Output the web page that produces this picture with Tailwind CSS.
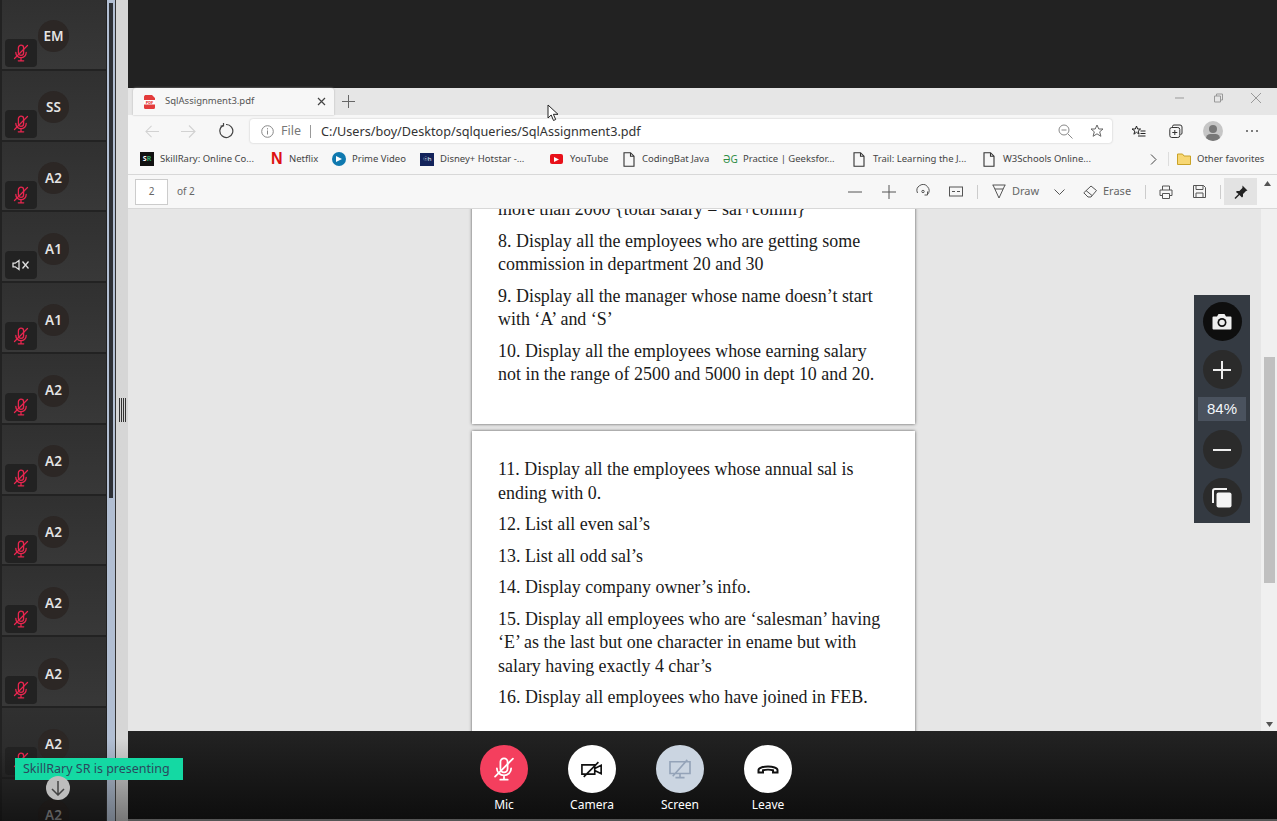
<!doctype html>
<html lang="en"><head><meta charset="utf-8"><title>Meeting</title>
<script src="https://cdn.jsdelivr.net/npm/@tailwindcss/browser@4"></script></head>
<body class="m-0 overflow-hidden bg-[#222]">
<svg width="0" height="0" class="absolute">
<defs>
<symbol id="mm" viewBox="0 0 16 18"><g fill="none" stroke="currentColor" stroke-width="1.300" stroke-linecap="round"><path d="M5.400 8.500V3.800a2.600 2.600 0 0 1 5.200 0v5a2.600 2.600 0 0 1-5.200 0"/><path d="M2.800 8.500a5.200 5.200 0 0 0 10.400 0M8 13.800V16.500M5.300 16.800h5.400"/><path d="M1.500 14.500L14.500 1.500"/></g></symbol>
<symbol id="doc" viewBox="0 0 12 15"><path d="M1 .7h6.500L11 4.200v10H1zM7.500.7v3.500H11" fill="none" stroke="#333" stroke-width="1.100"/></symbol>
</defs></svg>
<div class="relative w-[1277px] h-[821px] flex overflow-hidden font-['Noto_Sans',sans-serif]">
  <!-- participants rail -->
  <div class="relative w-[107px] h-full shrink-0 pl-[2px] bg-[#222] border-r border-[#222] overflow-hidden">
    <div class="flex flex-col text-[#e4e4e4] text-[13.500px] font-semibold">
      <div class="relative h-[70.8px] shrink-0 border-b-2 border-[#222] bg-gradient-to-b from-[#303030] to-[#383838]"><span class="absolute left-[36px] top-[20px] w-[31px] h-[32px] rounded-full bg-[#2c2725] flex items-center justify-center">EM</span><span class="absolute left-[3px] top-[39px] w-[32px] h-[28px] rounded-[4px] bg-[#222] flex items-center justify-center text-[#e8264f]"><svg width="16" height="18"><use href="#mm"/></svg></span></div>
      <div class="relative h-[70.8px] shrink-0 border-b-2 border-[#222] bg-gradient-to-b from-[#303030] to-[#383838]"><span class="absolute left-[36px] top-[20px] w-[31px] h-[32px] rounded-full bg-[#2c2725] flex items-center justify-center">SS</span><span class="absolute left-[3px] top-[39px] w-[32px] h-[28px] rounded-[4px] bg-[#222] flex items-center justify-center text-[#e8264f]"><svg width="16" height="18"><use href="#mm"/></svg></span></div>
      <div class="relative h-[70.8px] shrink-0 border-b-2 border-[#222] bg-gradient-to-b from-[#303030] to-[#383838]"><span class="absolute left-[36px] top-[20.600px] w-[31px] h-[32px] rounded-full bg-[#2c2725] flex items-center justify-center">A2</span><span class="absolute left-[3px] top-[39px] w-[32px] h-[28px] rounded-[4px] bg-[#222] flex items-center justify-center text-[#e8264f]"><svg width="16" height="18"><use href="#mm"/></svg></span></div>
      <div class="relative h-[70.8px] shrink-0 border-b-2 border-[#222] bg-gradient-to-b from-[#303030] to-[#383838]"><span class="absolute left-[36px] top-[20.600px] w-[31px] h-[32px] rounded-full bg-[#2c2725] flex items-center justify-center">A1</span><span class="absolute left-[3px] top-[39px] w-[32px] h-[28px] rounded-[4px] bg-[#222] flex items-center justify-center text-[#e0e0e0]"><svg width="18" height="12" viewBox="0 0 18 12" fill="none" stroke="currentColor" stroke-width="1.300"><path d="M1 4.200h2.200L7 1.500v9L3.200 7.800H1z"/><path d="M10.500 2.500l6 7M16.500 2.500l-6 7"/></svg></span></div>
      <div class="relative h-[70.8px] shrink-0 border-b-2 border-[#222] bg-gradient-to-b from-[#303030] to-[#383838]"><span class="absolute left-[36px] top-[20.600px] w-[31px] h-[32px] rounded-full bg-[#2c2725] flex items-center justify-center">A1</span><span class="absolute left-[3px] top-[39px] w-[32px] h-[28px] rounded-[4px] bg-[#222] flex items-center justify-center text-[#e8264f]"><svg width="16" height="18"><use href="#mm"/></svg></span></div>
      <div class="relative h-[70.8px] shrink-0 border-b-2 border-[#222] bg-gradient-to-b from-[#303030] to-[#383838]"><span class="absolute left-[36px] top-[20.600px] w-[31px] h-[32px] rounded-full bg-[#2c2725] flex items-center justify-center">A2</span><span class="absolute left-[3px] top-[39px] w-[32px] h-[28px] rounded-[4px] bg-[#222] flex items-center justify-center text-[#e8264f]"><svg width="16" height="18"><use href="#mm"/></svg></span></div>
      <div class="relative h-[70.8px] shrink-0 border-b-2 border-[#222] bg-gradient-to-b from-[#303030] to-[#383838]"><span class="absolute left-[36px] top-[20.600px] w-[31px] h-[32px] rounded-full bg-[#2c2725] flex items-center justify-center">A2</span><span class="absolute left-[3px] top-[39px] w-[32px] h-[28px] rounded-[4px] bg-[#222] flex items-center justify-center text-[#e8264f]"><svg width="16" height="18"><use href="#mm"/></svg></span></div>
      <div class="relative h-[70.8px] shrink-0 border-b-2 border-[#222] bg-gradient-to-b from-[#303030] to-[#383838]"><span class="absolute left-[36px] top-[20.600px] w-[31px] h-[32px] rounded-full bg-[#2c2725] flex items-center justify-center">A2</span><span class="absolute left-[3px] top-[39px] w-[32px] h-[28px] rounded-[4px] bg-[#222] flex items-center justify-center text-[#e8264f]"><svg width="16" height="18"><use href="#mm"/></svg></span></div>
      <div class="relative h-[70.8px] shrink-0 border-b-2 border-[#222] bg-gradient-to-b from-[#303030] to-[#383838]"><span class="absolute left-[36px] top-[20.600px] w-[31px] h-[32px] rounded-full bg-[#2c2725] flex items-center justify-center">A2</span><span class="absolute left-[3px] top-[39px] w-[32px] h-[28px] rounded-[4px] bg-[#222] flex items-center justify-center text-[#e8264f]"><svg width="16" height="18"><use href="#mm"/></svg></span></div>
      <div class="relative h-[70.8px] shrink-0 border-b-2 border-[#222] bg-gradient-to-b from-[#303030] to-[#383838]"><span class="absolute left-[36px] top-[20.600px] w-[31px] h-[32px] rounded-full bg-[#2c2725] flex items-center justify-center">A2</span><span class="absolute left-[3px] top-[39px] w-[32px] h-[28px] rounded-[4px] bg-[#222] flex items-center justify-center text-[#e8264f]"><svg width="16" height="18"><use href="#mm"/></svg></span></div>
      <div class="relative h-[70.8px] shrink-0 border-b-2 border-[#222] bg-gradient-to-b from-[#303030] to-[#2a2a2a]"><span class="absolute left-[36px] top-[20.600px] w-[31px] h-[32px] rounded-full bg-[#2c2725] flex items-center justify-center">A2</span><span class="absolute left-[3px] top-[39px] w-[32px] h-[28px] rounded-[4px] bg-[#222] flex items-center justify-center text-[#e8264f]"><svg width="16" height="18"><use href="#mm"/></svg></span></div>
      <div class="relative h-[70.8px] shrink-0 bg-[#2a2a2a]"><span class="absolute left-[36px] top-[20.600px] w-[31px] h-[32px] rounded-full bg-[#2c2725] flex items-center justify-center text-[#aaa]">A2</span></div>
    </div>
    <div class="absolute left-0 right-0 bottom-0 h-[70px] bg-gradient-to-b from-transparent to-black/50"></div>
  </div>
  <!-- rail scrollbar and splitter -->
  <div class="relative w-[8px] h-full shrink-0 bg-gradient-to-b from-[#b2bfd3] via-[#b2bfd3] via-90% to-[#6f7782] px-[2px]">
    <div class="mt-[3px] h-[495px] w-[4px] bg-[#2e3136]"></div>
  </div>
  <div class="w-[1px] h-full shrink-0 bg-[#333]"></div>
  <div class="relative w-[12px] h-full shrink-0 bg-gradient-to-b from-[#d6d6d6] via-[#d6d6d6] via-90% to-[#777] flex items-center justify-center">
    <div class="flex gap-[1px] h-[24px] -mt-[1px]">
      <span class="w-[1px] bg-[#333]"></span><span class="w-[1px] bg-[#333]"></span><span class="w-[1px] bg-[#333]"></span><span class="w-[1px] bg-[#333]"></span>
    </div>
  </div>
  <!-- main -->
  <div class="relative flex-1 min-w-0 h-full flex flex-col">
    <div class="h-[88px] shrink-0 bg-[#222]"></div>
    <div class="h-[643px] shrink-0 flex flex-col bg-[#f7f7f7] text-[#555]">
      <!-- tabs -->
      <div class="h-[27px] shrink-0 bg-[#e6e6e6] flex items-start relative">
        <div class="ml-[5px] w-[201px] h-[27px] bg-[#f7f7f7] rounded-t-[3px] shadow-[0_0_2px_#aaa] flex items-center pl-[10px] pr-[8px]">
          <svg width="13" height="14" viewBox="0 0 13 14"><path d="M2 0h7l3 3v9.500a1.500 1.500 0 0 1-1.500 1.500h-8.500a1.500 1.500 0 0 1-1-1.500V1.500z" fill="#e33b3b"/><rect x="1" y="5" width="11" height="4.500" fill="#fff"/><text x="6.500" y="8.800" font-size="4" font-weight="700" text-anchor="middle" fill="#d22">PDF</text></svg>
          <span class="ml-[9px] text-[9.500px] text-[#555]">SqlAssignment3.pdf</span>
          <svg class="ml-auto" width="9" height="9" viewBox="0 0 9 9" stroke="#444" stroke-width="1.200"><path d="M1 1l7 7M8 1L1 8"/></svg>
        </div>
        <svg class="ml-[8px] mt-[7px]" width="13" height="13" viewBox="0 0 13 13" stroke="#666" stroke-width="1"><path d="M6.500 0v13M0 6.500h13"/></svg>
        <div class="ml-auto mr-[16px] mt-[5px] flex items-center gap-[28px]">
          <svg width="10" height="10" viewBox="0 0 10 10" stroke="#999"><path d="M0 5h9"/></svg>
          <svg width="10" height="10" viewBox="0 0 10 10" stroke="#999" fill="none"><path d="M1.500 3h6v6h-6zM3.500 3V1h6v6h-2"/></svg>
          <svg width="10" height="10" viewBox="0 0 10 10" stroke="#999"><path d="M0 0l10 10M10 0L0 10"/></svg>
        </div>
      </div>
      <!-- toolbar -->
      <div class="h-[31px] shrink-0 flex items-center bg-[#f7f7f7] pt-[1px]">
        <svg class="ml-[17px]" width="14" height="13" viewBox="0 0 15 13" fill="none" stroke="#d2d2d2" stroke-width="1.100"><path d="M15 6.500H1M7 .5l-6 6 6 6"/></svg>
        <svg class="ml-[22px]" width="15" height="13" viewBox="0 0 15 13" fill="none" stroke="#d2d2d2" stroke-width="1.100"><path d="M0 6.500h14M8 .5l6 6-6 6"/></svg>
        <svg class="ml-[22px]" width="16" height="16" viewBox="0 0 16 16" fill="none" stroke="#444" stroke-width="1.200"><path d="M5 2.400a6.500 6.500 0 1 0 3-.9"/><path d="M5.500 0v3H2.500"/></svg>
        <div class="ml-[16px] w-[862px] h-[24px] bg-white rounded-[3px] shadow-[0_0_2px_#bbb] flex items-center pl-[11px] pr-[8px]">
          <svg width="13" height="13" viewBox="0 0 13 13" fill="none" stroke="#888"><circle cx="6.500" cy="6.500" r="5.800"/><path d="M6.500 5.500v4M6.500 3.200v1.200"/></svg>
          <span class="ml-[7px] text-[12.500px] text-[#777]">File</span>
          <span class="ml-[9px] w-[1px] h-[13px] bg-[#999]"></span>
          <span class="ml-[10px] text-[12.650px] text-[#333]">C:/Users/boy/Desktop/sqlqueries/SqlAssignment3.pdf</span>
          <svg class="ml-auto" width="15" height="15" viewBox="0 0 15 15" fill="none" stroke="#888"><circle cx="6" cy="6" r="5"/><path d="M3.500 6h5M10 10l4.500 4.500"/></svg>
          <svg class="ml-[17px]" width="14" height="14" viewBox="0 0 14 14" fill="none" stroke="#666"><path d="M7 1l1.800 4h4.200l-3.300 2.800 1.200 4.500L7 9.800l-3.900 2.500 1.200-4.500L1 5h4.200z"/></svg>
        </div>
        <svg class="ml-[20px]" width="14" height="13" viewBox="0 0 14 13" fill="none" stroke="#222" stroke-width="1"><path d="M4.500 1l1.100 3h3l-2.400 2 .9 3.200-2.600-1.900-2.600 1.900.9-3.200L0 4h3.300z"/><path d="M8.500 6h5M8.500 8.500h5M6 11h7.500" stroke-width="1.100"/></svg>
        <svg class="ml-[23px]" width="14" height="14" viewBox="0 0 14 14" fill="none" stroke="#333"><path d="M3.500 3.500v-1a1.500 1.500 0 0 1 1.500-1.500h6a2 2 0 0 1 2 2v6a1.500 1.500 0 0 1-1.500 1.500"/><rect x=".8" y="3.500" width="10" height="10" rx="2"/><path d="M5.800 6v5M3.300 8.500h5"/></svg>
        <span class="ml-[20px] w-[20px] h-[20px] rounded-full bg-[#c6c6c6] overflow-hidden relative flex justify-center"><span class="absolute top-[4px] w-[8px] h-[8px] rounded-full bg-[#777]"></span><span class="absolute top-[13px] w-[14px] h-[9px] rounded-full bg-[#777]"></span></span>
        <span class="ml-[23px] flex gap-[3px]"><i class="w-[2px] h-[2px] rounded-full bg-[#555]"></i><i class="w-[2px] h-[2px] rounded-full bg-[#555]"></i><i class="w-[2px] h-[2px] rounded-full bg-[#555]"></i></span>
      </div>
      <!-- bookmarks -->
      <div class="h-[28px] shrink-0 flex items-center pb-[2px] pl-[12px] text-[9.500px] text-[#444] bg-[#f7f7f7] whitespace-nowrap">
        <div class="w-[131px] shrink-0 flex items-center"><span class="w-[14px] h-[14px] bg-[#111] text-[#fff] text-[7px] leading-[14px] font-bold text-center">S<span class="text-[#2fa36b]">R</span></span><span class="ml-[6px]">SkillRary: Online Co...</span></div>
        <div class="w-[61px] shrink-0 flex items-center"><span class="w-[10px] text-[#d11] text-[16px] font-bold leading-none font-['Liberation_Sans',sans-serif]">N</span><span class="ml-[8px]">Netflix</span></div>
        <div class="w-[88px] shrink-0 flex items-center"><span class="w-[14px] h-[14px] rounded-full bg-[#0f79af] flex items-center justify-center"><svg width="6" height="6" viewBox="0 0 6 6"><path d="M0 0l6 3-6 3z" fill="#fff"/></svg></span><span class="ml-[6px]">Prime Video</span></div>
        <div class="w-[130px] shrink-0 flex items-center"><span class="w-[14px] h-[13px] bg-[#13235b] text-[6px] leading-[13px] text-center text-white">☉h</span><span class="ml-[6px]">Disney+ Hotstar -...</span></div>
        <div class="w-[73px] shrink-0 flex items-center"><span class="w-[13px] h-[10px] rounded-[2px] bg-[#e8111a] flex items-center justify-center"><svg width="5" height="5" viewBox="0 0 6 6"><path d="M0 0l6 3-6 3z" fill="#fff"/></svg></span><span class="ml-[7px]">YouTube</span></div>
        <div class="w-[100px] shrink-0 flex items-center"><svg width="12" height="15"><use href="#doc"/></svg><span class="ml-[7px]">CodingBat Java</span></div>
        <div class="w-[130px] shrink-0 flex items-center"><span class="w-[14px] text-[#2f8d46] text-[10px] leading-none">ƏG</span><span class="ml-[6px]">Practice | Geeksfor...</span></div>
        <div class="w-[130px] shrink-0 flex items-center"><svg width="12" height="15"><use href="#doc"/></svg><span class="ml-[8px]">Trail: Learning the J...</span></div>
        <div class="w-[167px] shrink-0 flex items-center"><svg width="12" height="15"><use href="#doc"/></svg><span class="ml-[8px]">W3Schools Online...</span></div>
        <svg width="7" height="11" viewBox="0 0 7 11" fill="none" stroke="#444"><path d="M1 .5l5 5-5 5"/></svg>
        <span class="ml-[11px] w-[1px] h-[14px] bg-[#ddd]"></span>
        <svg class="ml-[8px]" width="14" height="12" viewBox="0 0 14 12"><path d="M.5 1h5l1.500 2h6.500v8.500H.5z" fill="#f7d774" stroke="#c9a227"/></svg>
        <span class="ml-[6px]">Other favorites</span>
      </div>
      <!-- pdf toolbar -->
      <div class="h-[35px] shrink-0 flex items-center border-t border-b border-[#d8d8d8] text-[11px] text-[#666] bg-[#f7f7f7]">
        <span class="ml-[7px] w-[33px] h-[26px] border border-[#ccc] bg-white flex items-center justify-center text-[10px]">2</span>
        <span class="ml-[9px] w-[18px] text-[10px]">of 2</span>
        <svg class="ml-[653px]" width="14" height="14" viewBox="0 0 14 14" stroke="#555"><path d="M0 7h14"/></svg>
        <svg class="ml-[20px]" width="14" height="14" viewBox="0 0 14 14" stroke="#555"><path d="M7 0v14M0 7h14"/></svg>
        <svg class="ml-[20px]" width="14" height="15" viewBox="0 0 14 15" fill="none" stroke="#555"><path d="M1.500 9a6 6 0 1 1 10 1.500M11.500 7.500v3.500h-3"/><circle cx="7" cy="7.500" r="1.200"/></svg>
        <svg class="ml-[19px]" width="14" height="11" viewBox="0 0 14 11" fill="none" stroke="#555"><rect x=".5" y="1" width="13" height="9"/><path d="M3 5.500h3M8 5.500h3"/></svg>
        <span class="ml-[14px] w-[1px] h-[14px] bg-[#ccc]"></span>
        <svg class="ml-[14px]" width="14" height="15" viewBox="0 0 14 15" fill="none" stroke="#555"><path d="M.5 1h13M1 1l6 13 6-13M3 5h8"/></svg>
        <span class="ml-[6px] w-[27px]">Draw</span>
        <svg class="ml-[15px]" width="11" height="6" viewBox="0 0 11 6" fill="none" stroke="#555"><path d="M.5.5l5 5 5-5"/></svg>
        <svg class="ml-[18px]" width="14" height="13" viewBox="0 0 14 13" fill="none" stroke="#555"><path d="M8 1l5.500 4.500-5.500 6.500H5L.8 7.800zM3 5.500l6 5"/></svg>
        <span class="ml-[6px] w-[27px]">Erase</span>
        <span class="ml-[15px] w-[1px] h-[14px] bg-[#ccc]"></span>
        <svg class="ml-[13px]" width="14" height="14" viewBox="0 0 14 14" fill="none" stroke="#555"><path d="M3.500 5V1h7v4M3.500 10.500H1V5h12v5.500h-2.500M3.500 8.500h7v5h-7z"/></svg>
        <svg class="ml-[20px]" width="13" height="13" viewBox="0 0 13 13" fill="none" stroke="#555"><path d="M.5.500h10l2 2v10H.5zM3 .5v4h7V.5M3 12.500V8h7v4.500"/></svg>
        <span class="ml-[14px] w-[1px] h-[14px] bg-[#ccc]"></span>
        <span class="ml-[3px] w-[33px] h-[27px] bg-[#e3e3e3] flex items-center justify-center"><svg width="14" height="14" viewBox="0 0 14 14" fill="#222"><path d="M8.500.5l5 5-1.500.5-3 3 0 2.500-1 1-2.500-2.500-4 4-1-1 4-4L1.900 7l1-1 2.500 0 3-3z"/></svg></span>
        <svg class="ml-[7px] self-start mt-[6px]" width="7" height="5" viewBox="0 0 7 5"><path d="M3.500 0l3.500 5H0z" fill="#555"/></svg>
      </div>
      <!-- pdf viewer -->
      <div class="relative flex-1 min-h-0 flex bg-[#e6e6e6] overflow-hidden">
        <div class="flex-1 min-w-0 overflow-hidden pl-[344px] font-['Liberation_Serif',serif] text-[17.950px] leading-[23.500px] text-[#1a1a1a] whitespace-nowrap">
          <div class="-mt-[11px] w-[443px] h-[226px] bg-white shadow-[0_0_3px_#555] pl-[26px] flex flex-col gap-[8px]">
            <p>more than 2000 {total salary = sal+comm}</p>
            <p>8. Display all the employees who are getting some<br>commission in department 20 and 30</p>
            <p>9. Display all the manager whose name doesn’t start<br>with ‘A’ and ‘S’</p>
            <p>10. Display all the employees whose earning salary<br>not in the range of 2500 and 5000 in dept 10 and 20.</p>
          </div>
          <div class="mt-[7px] w-[443px] h-[320px] bg-white shadow-[0_0_3px_#555] pl-[26px] pt-[27px] flex flex-col gap-[8px]">
            <p>11. Display all the employees whose annual sal is<br>ending with 0.</p>
            <p>12. List all even sal’s</p>
            <p>13. List all odd sal’s</p>
            <p>14. Display company owner’s info.</p>
            <p>15. Display all employees who are ‘salesman’ having<br>‘E’ as the last but one character in ename but with<br>salary having exactly 4 char’s</p>
            <p>16. Display all employees who have joined in FEB.</p>
          </div>
        </div>
        <!-- scrollbar -->
        <div class="w-[16px] shrink-0 bg-[#f0f0f0] flex flex-col items-center">
          <div class="mt-[148px] w-[11px] h-[226px] bg-[#c0c0c0]"></div>
          <svg class="mt-auto mb-[4px]" width="7" height="5" viewBox="0 0 7 5"><path d="M0 0h7L3.500 5z" fill="#555"/></svg>
        </div>
      </div>
    </div>
    <!-- meeting bar -->
    <div class="flex-1 min-h-0 bg-gradient-to-b from-[#232323] to-[#0e0e0e] border-b-2 border-[#555] flex pl-[332px] text-white text-[12px]">
      <div class="w-[88px] flex flex-col items-center pt-[14px]">
        <span class="w-[48px] h-[48px] rounded-full bg-[#f43f5e] flex items-center justify-center text-white"><svg width="22" height="26"><use href="#mm"/></svg></span><span class="mt-[4px] leading-[16px]">Mic</span>
      </div>
      <div class="w-[88px] flex flex-col items-center pt-[14px]">
        <span class="w-[48px] h-[48px] rounded-full bg-white flex items-center justify-center"><svg width="22" height="17" viewBox="0 0 24 18" fill="none" stroke="#111" stroke-width="1.800"><path d="M1 4h14v10H1zM15 8l7-3.500v9L15 10M3 17L19 1"/></svg></span><span class="mt-[4px] leading-[16px]">Camera</span>
      </div>
      <div class="w-[88px] flex flex-col items-center pt-[14px]">
        <span class="w-[48px] h-[48px] rounded-full bg-[#cbd5e1] flex items-center justify-center"><svg width="22" height="20" viewBox="0 0 24 22" fill="none" stroke="#94a3b8" stroke-width="1.800"><path d="M1 3h22v13H1zM12 16v4M7 20.500h10M4 19L20 1"/></svg></span><span class="mt-[4px] leading-[16px]">Screen</span>
      </div>
      <div class="w-[88px] flex flex-col items-center pt-[14px]">
        <span class="w-[48px] h-[48px] rounded-full bg-white flex items-center justify-center"><svg width="22" height="9" viewBox="0 0 22 9" fill="none" stroke="#111" stroke-width="2"><path d="M1.500 7.500V5C1.500 3 6 1.500 11 1.500S20.500 3 20.500 5v2.500h-4.500V5.200C14 4.700 8 4.700 6 5.200v2.300z"/></svg></span><span class="mt-[4px] leading-[16px]">Leave</span>
      </div>
    </div>
    <!-- floating zoom panel -->
    <div class="absolute left-[1066px] top-[295px] w-[56px] h-[228px] bg-[#343a42] flex flex-col items-center pt-[7px]">
      <span class="w-[39px] h-[39px] rounded-full bg-[#0e0e0e] flex items-center justify-center"><svg width="20" height="17" viewBox="0 0 20 17"><path d="M1.500 3.500H5L6.500 1h6L14 3.500h4.500a1 1 0 0 1 1 1v11a1 1 0 0 1-1 1h-17a1 1 0 0 1-1-1v-11a1 1 0 0 1 1-1z" fill="#eee"/><circle cx="10" cy="9.500" r="4.500" fill="#111"/><circle cx="10" cy="9.500" r="2.800" fill="#eee"/></svg></span>
      <span class="mt-[9px] w-[39px] h-[39px] rounded-full bg-[#2b2b2b] flex items-center justify-center"><svg width="20" height="20" viewBox="0 0 20 20" stroke="#eee" stroke-width="2"><path d="M10 1v18M1 10h18"/></svg></span>
      <span class="mt-[8px] w-[48px] h-[24px] bg-[#4a525e] text-[#f2f6fb] text-[15px] flex items-center justify-center font-['Liberation_Sans',sans-serif]">84%</span>
      <span class="mt-[9px] w-[39px] h-[39px] rounded-full bg-[#2b2b2b] flex items-center justify-center"><svg width="18" height="4" viewBox="0 0 18 4" stroke="#eee" stroke-width="2"><path d="M0 2h18"/></svg></span>
      <span class="mt-[9px] w-[39px] h-[39px] rounded-full bg-[#2b2b2b] flex items-center justify-center"><svg width="20" height="20" viewBox="0 0 20 20" fill="none"><path d="M1 15V3a2 2 0 0 1 2-2h12" stroke="#f4f4f4" stroke-width="2"/><rect x="4.500" y="4.500" width="15" height="15" rx="2" fill="#f4f4f4"/></svg></span>
    </div>
    <!-- cursor -->
    <svg class="absolute left-[419px] top-[104px]" width="12" height="18" viewBox="0 0 12 18"><path d="M1 1v13l3.200-3 2.300 5.500 2.200-1-2.300-5.200H11z" fill="#fff" stroke="#222"/></svg>
  </div>
  <!-- overlays on the rail -->
  <div class="absolute left-[15px] top-[758px] w-[168px] h-[22px] bg-[#14d9a3] text-[#2a4a5e] text-[12.500px] leading-[22px] pl-[8px]">SkillRary SR is presenting</div>
  <div class="absolute left-[46px] top-[776px] w-[24px] h-[24px] rounded-full bg-[#bdbdbd] flex items-center justify-center"><svg width="14" height="15" viewBox="0 0 14 15" fill="none" stroke="#444" stroke-width="1.500"><path d="M7 0v13.500M1 8l6 6 6-6"/></svg></div>
</div>
</body></html>
